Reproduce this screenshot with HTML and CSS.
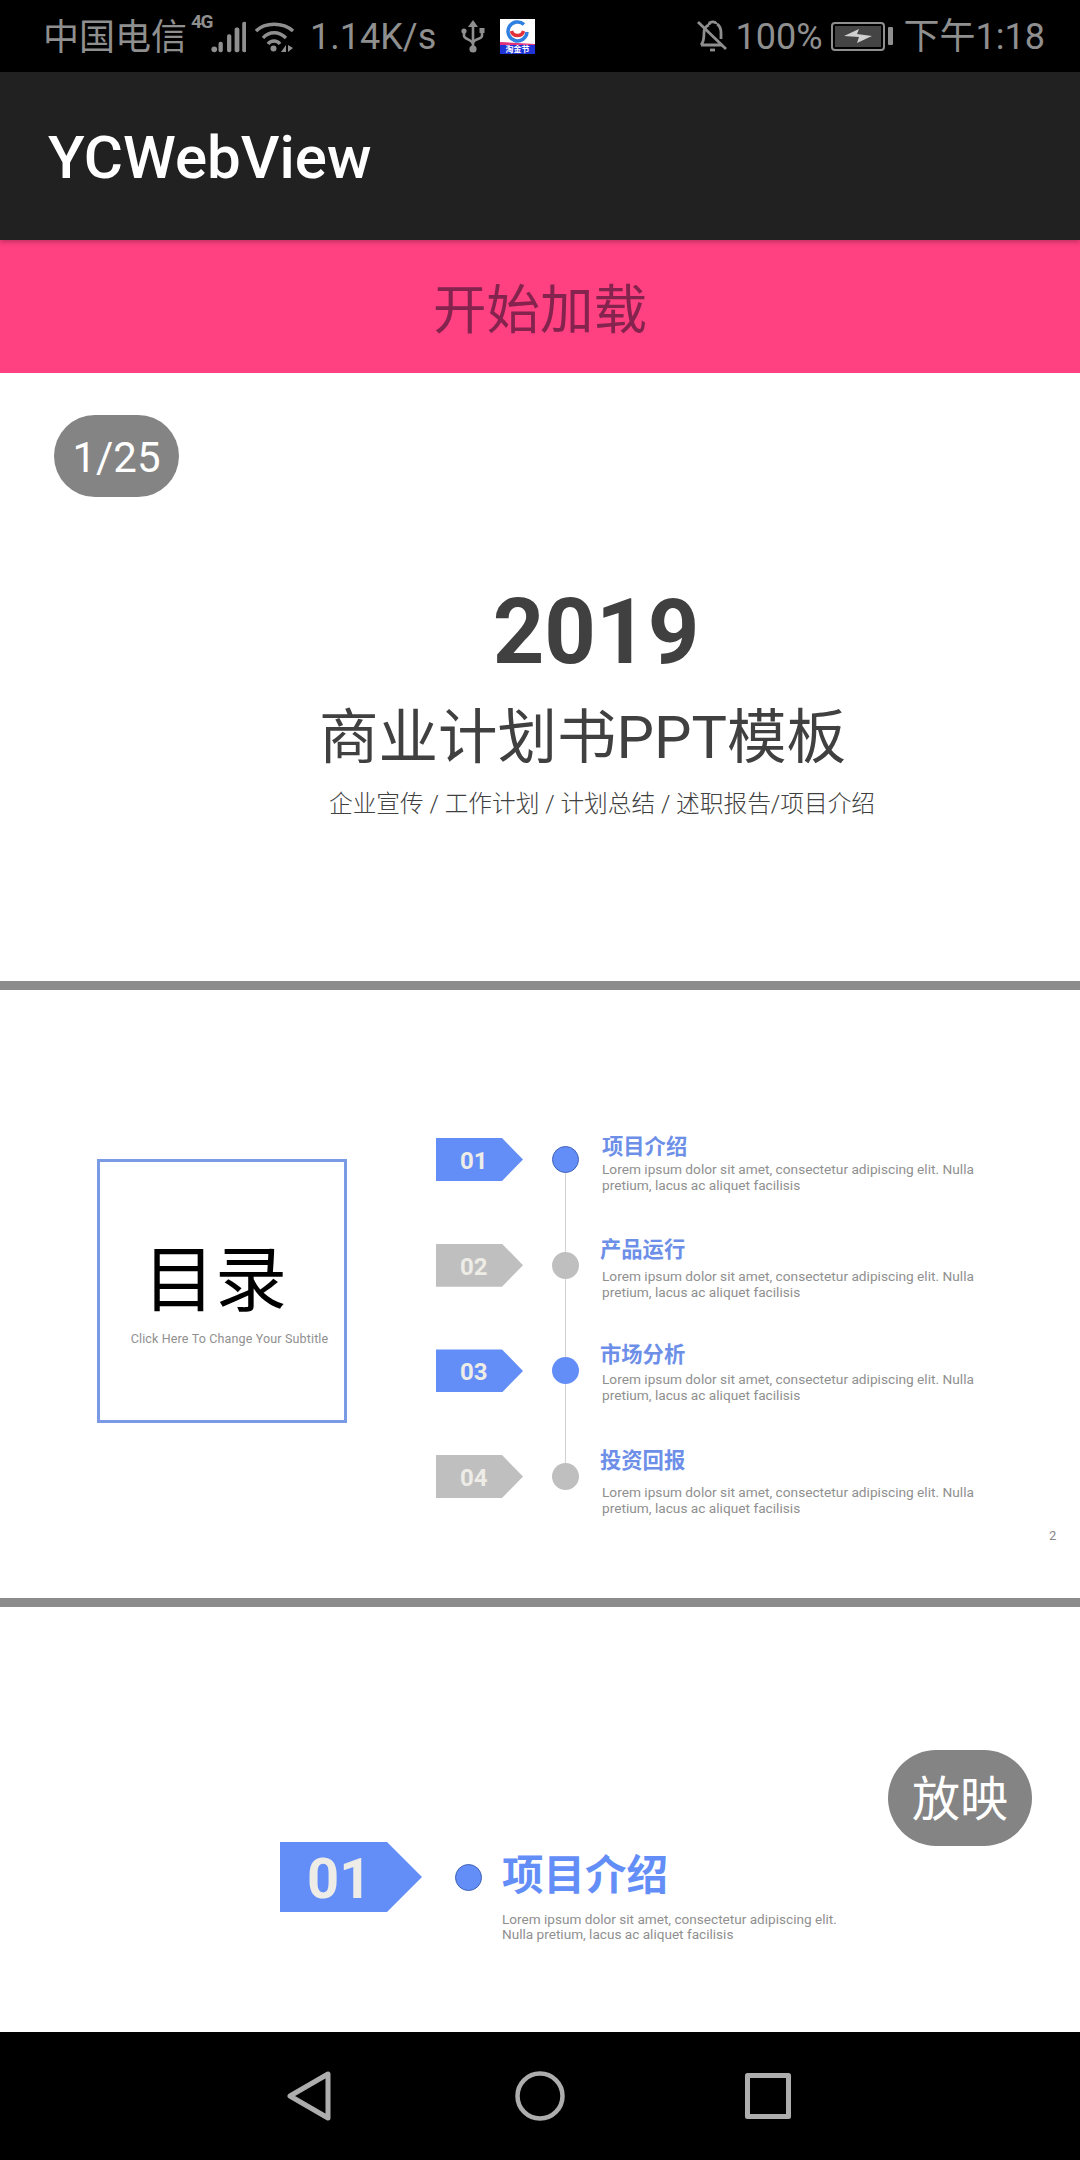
FILE: index.html
```html
<!DOCTYPE html>
<html>
<head>
  <title>YCWebView</title>
  <link rel="stylesheet" href="styles.css">
</head>
<body>
  <div id="phone">
    <div id="statusbar">
      <span class="carrier">中国电信</span>
      <span class="net-type">4G</span>
      <svg class="signal" width="36" height="34" viewBox="0 0 38 34">
        <circle cx="4.500" cy="30" r="3"/>
        <rect x="9" y="22" width="4.500" height="11" rx="2"/>
        <rect x="18" y="14" width="4.500" height="19" rx="2"/>
        <rect x="26" y="7" width="5" height="26" rx="2"/>
        <rect x="34" y="1" width="4.500" height="32" rx="2"/>
      </svg>
      <svg class="wifi" width="40" height="34" viewBox="0 0 40 34" fill="none" stroke="#8f8f8f" stroke-width="3.400">
        <path d="M1 12C10 3 28 3 38 12"/>
        <path d="M8 19C14 12 24 12 31 19"/>
        <path d="M13 25C16 21 22 21 25 25"/>
        <circle cx="18.500" cy="29.500" r="3" fill="#8f8f8f" stroke="none"/>
        <path d="M31 33V26L26 33ZM33 26V33L38 29Z" fill="#8f8f8f" stroke="none"/>
      </svg>
      <span class="speed">1.14K/s</span>
      <svg class="usb" width="24" height="35" viewBox="0 0 24 35" fill="none" stroke="#8f8f8f" stroke-width="2.600">
        <path d="M12 3V29"/>
        <path d="M7 8L12 1L17 8Z" fill="#8f8f8f" stroke="none"/>
        <circle cx="12" cy="30" r="3.600" fill="#8f8f8f" stroke="none"/>
        <path d="M3 13V17C3 20 12 21 12 25"/>
        <path d="M21 12V17C21 20 12 20 12 24"/>
        <circle cx="3" cy="12" r="2.600" fill="#8f8f8f" stroke="none"/>
        <rect x="18.500" y="9" width="5" height="5" fill="#8f8f8f" stroke="none"/>
      </svg>
      <div class="app-icon">
        <svg width="35" height="26" viewBox="0 0 35 26" fill="none">
          <path d="M24 5.500A9.500 9.500 0 1 0 27 13" stroke="#2f7fe0" stroke-width="3.500"/>
          <path d="M11.500 12C13 18 22 18 23.500 12" stroke="#e0313a" stroke-width="3.500"/>
          <path d="M0 23L35 25V26H0Z" fill="#e0317a"/>
        </svg>
        <span class="app-icon-label">淘金节</span>
      </div>
      <div class="status-right">
        <svg class="bell" width="31" height="34" viewBox="0 0 31 34" fill="none" stroke="#8f8f8f" stroke-width="2.800">
          <path d="M4 26C7 23 7 19 7 14C7 10 9 7 12 6M20 5C23 7 24 10 24 14V20M4 26H25"/>
          <path d="M12 6C12 2 19 2 19 5"/>
          <path d="M13 31H18"/>
          <path d="M1 3L29 30"/>
        </svg>
        <span class="percent">100%</span>
        <div class="battery">
          <div class="battery-body">
            <div class="battery-fill">
              <svg width="28" height="14" viewBox="0 0 28 14"><path d="M0 7L15 0L13 5L28 7L13 14L15 8Z" fill="#d0d0d0"/></svg>
            </div>
          </div>
          <div class="battery-nub"></div>
        </div>
        <span class="clock">下午1:18</span>
      </div>
    </div>

    <div id="toolbar">YCWebView</div>
    <div id="load-btn">开始加载</div>

    <div id="viewer">
      <div class="page-badge">1/25</div>

      <div class="slide slide-cover">
        <div class="cover-year">2019</div>
        <div class="cover-title">商业计划书PPT模板</div>
        <div class="cover-sub">企业宣传 / 工作计划 / 计划总结 / 述职报告/项目介绍</div>
      </div>

      <div class="divider"></div>

      <div class="slide slide-toc">
        <div class="toc-box">
          <div class="toc-title">目录</div>
          <div class="toc-sub">Click Here To Change Your Subtitle</div>
        </div>
        <div class="agenda">
          <div class="agenda-row">
            <div class="tag">01</div>
            <div class="dot-col"><div class="dot dot-edge"></div><div class="stem"></div></div>
            <div class="agenda-text">
              <div class="agenda-title">项目介绍</div>
              <div class="lorem">Lorem ipsum dolor sit amet, consectetur adipiscing elit. Nulla<br>pretium, lacus ac aliquet facilisis</div>
            </div>
          </div>
          <div class="agenda-row muted">
            <div class="tag">02</div>
            <div class="dot-col"><div class="dot"></div><div class="stem"></div></div>
            <div class="agenda-text shift">
              <div class="agenda-title">产品运行</div>
              <div class="lorem gap">Lorem ipsum dolor sit amet, consectetur adipiscing elit. Nulla<br>pretium, lacus ac aliquet facilisis</div>
            </div>
          </div>
          <div class="agenda-row">
            <div class="tag">03</div>
            <div class="dot-col"><div class="dot"></div><div class="stem"></div></div>
            <div class="agenda-text shift">
              <div class="agenda-title">市场分析</div>
              <div class="lorem gap-sm">Lorem ipsum dolor sit amet, consectetur adipiscing elit. Nulla<br>pretium, lacus ac aliquet facilisis</div>
            </div>
          </div>
          <div class="agenda-row muted">
            <div class="tag">04</div>
            <div class="dot-col"><div class="dot"></div></div>
            <div class="agenda-text shift">
              <div class="agenda-title">投资回报</div>
              <div class="lorem gap-lg">Lorem ipsum dolor sit amet, consectetur adipiscing elit. Nulla<br>pretium, lacus ac aliquet facilisis</div>
            </div>
          </div>
        </div>
        <div class="slide-num">2</div>
      </div>

      <div class="divider"></div>

      <div class="slide slide-section">
        <div class="tag tag-big">01</div>
        <div class="dot dot-edge"></div>
        <div class="section-text">
          <div class="section-title">项目介绍</div>
          <div class="lorem section-lorem">Lorem ipsum dolor sit amet, consectetur adipiscing elit.<br>Nulla pretium, lacus ac aliquet facilisis</div>
        </div>
      </div>

      <div class="play-badge">放映</div>
    </div>

    <div id="navbar">
      <svg width="44" height="50" viewBox="0 0 44 50" fill="none" stroke="#adadad" stroke-width="5" stroke-linejoin="round">
        <path d="M3 25L41 3V47Z"/>
      </svg>
      <svg width="50" height="50" viewBox="0 0 50 50" fill="none" stroke="#adadad" stroke-width="4.500">
        <circle cx="25" cy="25" r="22.500"/>
      </svg>
      <svg width="46" height="46" viewBox="0 0 46 46" fill="none" stroke="#adadad" stroke-width="5" stroke-linejoin="round">
        <rect x="2.500" y="2.500" width="41" height="41"/>
      </svg>
    </div>
  </div>
</body>
</html>
```

FILE: styles.css
```css
body {
  margin: 0;
  padding: 0;
  background-color: #fff;
  font-family: Roboto, "Noto Sans CJK SC", sans-serif;
}
#phone {
  width: 1080px;
  height: 2160px;
  display: flex;
  flex-direction: column;
  overflow: hidden;
}

/* status bar */
#statusbar {
  height: 72px;
  flex: none;
  background-color: #000;
  color: #8f8f8f;
  display: flex;
  align-items: center;
  padding: 0 35px 0 43px;
  font-size: 36px;
  line-height: 72px;
  white-space: nowrap;
}
.carrier {
  width: 144px;
  padding-top: 3px;
}
.net-type {
  font-size: 19px;
  font-weight: 700;
  letter-spacing: -1.500px;
  line-height: 20px;
  width: 20px;
  margin: -28px 0 0 4px;
}
.signal {
  fill: #8f8f8f;
  margin: 0 0 -1px -1px;
}
.wifi {
  margin-left: 9px;
}
.speed {
  margin-left: 15px;
  width: 127px;
  padding-top: 2px;
}
.usb {
  margin-left: 24px;
}
.app-icon {
  margin-left: 15px;
  width: 35px;
  height: 35px;
  background-color: #fff;
  display: flex;
  flex-direction: column;
  overflow: hidden;
}
.app-icon-label {
  height: 9px;
  line-height: 9px;
  background-color: #1f35d8;
  color: #fff;
  font-size: 8px;
  font-weight: 700;
  text-align: center;
}
.status-right {
  margin-left: auto;
  display: flex;
  align-items: center;
}
.bell {
  margin-right: -1px;
}
.percent {
  margin-left: 9px;
  width: 84px;
  padding-top: 2px;
}
.battery {
  margin-left: 11px;
  display: flex;
  align-items: center;
  gap: 3px;
}
.battery-body {
  width: 54px;
  height: 29px;
  box-sizing: border-box;
  border: 2px solid #8f8f8f;
  border-radius: 4px;
  padding: 2px;
}
.battery-fill {
  height: 100%;
  background-color: #444;
  display: flex;
  align-items: center;
  justify-content: center;
}
.battery-nub {
  width: 5px;
  height: 18px;
  border-radius: 1px;
  background-color: #8f8f8f;
}
.clock {
  margin-left: 11px;
  padding-top: 2px;
}

/* app bar and button */
#toolbar {
  height: 168px;
  flex: none;
  box-sizing: border-box;
  background-color: #212121;
  color: #fff;
  font-size: 60px;
  font-weight: 500;
  line-height: 171px;
  padding-left: 48px;
  position: relative;
  box-shadow: 0 2px 5px rgba(0, 0, 0, 0.25);
}
#load-btn {
  height: 133px;
  flex: none;
  background-color: #ff4081;
  color: #84234d;
  font-size: 53.500px;
  line-height: 141px;
  text-align: center;
}

/* pdf viewer */
#viewer {
  flex: 1;
  position: relative;
  overflow: hidden;
}
.page-badge {
  position: absolute;
  left: 54px;
  top: 42px;
  width: 125px;
  height: 82px;
  border-radius: 41px;
  background-color: #848484;
  color: #fff;
  font-size: 42px;
  line-height: 86px;
  text-align: center;
}
.play-badge {
  position: absolute;
  left: 888px;
  top: 1377px;
  width: 144px;
  height: 96px;
  border-radius: 48px;
  background-color: #848484;
  color: #fff;
  font-size: 48px;
  line-height: 99px;
  text-align: center;
}
.divider {
  height: 9px;
  background-color: #8c8c8c;
}
.slide {
  height: 608px;
  box-sizing: border-box;
  position: relative;
}

/* cover */
.slide-cover {
  padding: 207px 0 0 112px;
  display: flex;
  flex-direction: column;
  align-items: center;
  color: #404040;
}
.cover-year {
  font-size: 90px;
  font-weight: 700;
  line-height: 106px;
}
.cover-title {
  font-size: 59.500px;
  font-weight: 400;
  line-height: 80px;
  margin: 12px 27px 0 0;
}
.cover-sub {
  font-size: 23.700px;
  font-weight: 300;
  line-height: 40px;
  margin: 6px 0 0 12px;
}

/* table of contents */
.slide-toc {
  display: flex;
  align-items: flex-start;
  padding: 148px 0 0 97px;
}
.toc-box {
  width: 250px;
  height: 264px;
  box-sizing: border-box;
  margin-top: 21px;
  border: 3px solid #7a9ae6;
  display: flex;
  flex-direction: column;
  align-items: center;
}
.toc-title {
  font-size: 72px;
  line-height: 80px;
  color: #000;
  margin: 79px 14px 0 0;
}
.toc-sub {
  font-size: 12.500px;
  letter-spacing: 0.150px;
  line-height: 16px;
  color: #8f8f8f;
  margin: 10px 0 0 15px;
  white-space: nowrap;
}
.agenda {
  margin-left: 89px;
}
.agenda-row {
  display: flex;
  align-items: stretch;
  height: 105.700px;
}
.tag {
  flex: none;
  width: 87px;
  height: 43px;
  box-sizing: border-box;
  padding-left: 24px;
  background-color: #648ef7;
  clip-path: polygon(0 0, 66px 0, 100% 50%, 66px 100%, 0 100%);
  color: #eeece6;
  font-size: 24px;
  font-weight: 700;
  line-height: 46px;
}
.muted .tag {
  background-color: #bfbfbf;
}
.dot-col {
  flex: none;
  width: 27px;
  margin-left: 29px;
  padding-top: 8px;
  display: flex;
  flex-direction: column;
  align-items: center;
}
.dot {
  flex: none;
  width: 27px;
  height: 27px;
  border-radius: 50%;
  background-color: #648ef7;
  box-sizing: border-box;
}
.dot-edge {
  border: 1px solid #3f62b5;
}
.muted .dot {
  background-color: #bfbfbf;
}
.stem {
  flex: 1;
  width: 1.500px;
  margin-bottom: -8px;
  background-color: #d2d2d2;
}
.agenda-text {
  margin-left: 23px;
}
.agenda-text.shift {
  margin-left: 21px;
}
.agenda-title {
  font-size: 21.300px;
  font-weight: 700;
  line-height: 22px;
  color: #6d8fe8;
  margin-top: -2px;
}
.shift .agenda-title {
  margin-top: -5px;
}
.lorem {
  font-size: 13.700px;
  line-height: 16px;
  color: #8f8f8f;
  white-space: nowrap;
  margin-top: 3px;
}
.lorem.gap {
  margin-top: 7px;
}
.lorem.gap-sm {
  margin-top: 5px;
}
.lorem.gap-lg {
  margin-top: 12px;
}
.shift .lorem {
  margin-left: 2px;
}
.slide-num {
  position: absolute;
  left: 1049px;
  top: 538px;
  font-size: 13px;
  color: #888;
}

/* section page */
.slide-section {
  display: flex;
  align-items: flex-start;
  padding: 235px 0 0 280px;
}
.tag-big {
  width: 142px;
  height: 70px;
  padding-left: 27px;
  clip-path: polygon(0 0, 107px 0, 100% 50%, 107px 100%, 0 100%);
  font-size: 56px;
  line-height: 75px;
}
.slide-section .dot {
  margin: 22px 0 0 33px;
}
.section-text {
  margin-left: 20px;
}
.section-title {
  font-size: 41.500px;
  font-weight: 700;
  line-height: 50px;
  color: #648ef7;
  margin-top: 9px;
}
.section-lorem {
  font-size: 13.600px;
  line-height: 15px;
  margin-top: 11px;
}

/* nav bar */
#navbar {
  height: 128px;
  flex: none;
  background-color: #000;
  display: flex;
  align-items: center;
  padding-left: 287px;
}
#navbar svg:nth-child(2) {
  margin-left: 184px;
}
#navbar svg:nth-child(3) {
  margin-left: 180px;
}
```
